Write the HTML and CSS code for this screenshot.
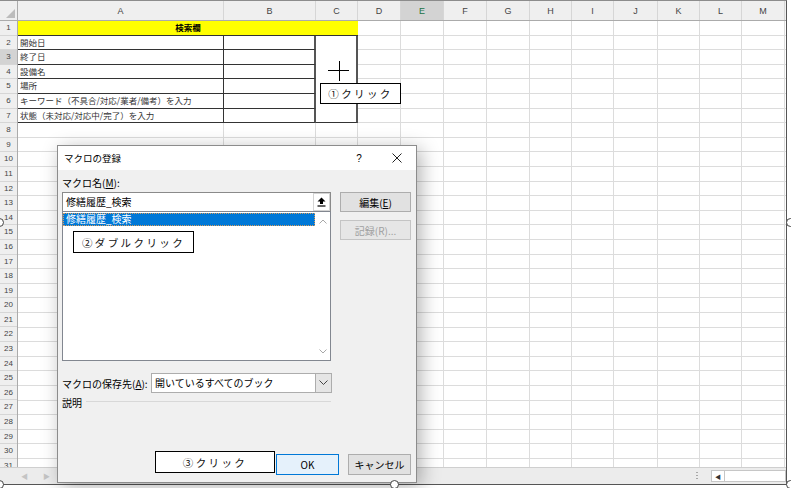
FILE: index.html
```html
<!DOCTYPE html>
<html lang="ja">
<head>
    <meta charset="UTF-8">
    <title>マクロの登録</title>
    <link rel="stylesheet" href="styles.css">
</head>
<body>
    <div class="shot">
        <div class="colhead">
            <div class="corner">
                <svg width="9" height="9" viewBox="0 0 9 9"><path d="M9 0V9H0Z" fill="#bcbcbc"/></svg>
            </div>
            <div>A</div><div>B</div><div>C</div><div>D</div>
            <div class="active">E</div>
            <div>F</div><div>G</div><div>H</div><div>I</div><div>J</div><div>K</div><div>L</div><div>M</div>
        </div>

        <div class="sheet">
            <div class="rowhead">
                <div>1</div><div>2</div><div class="active">3</div><div>4</div><div>5</div>
                <div>6</div><div>7</div><div>8</div><div>9</div><div>10</div>
                <div>11</div><div>12</div><div>13</div><div>14</div><div>15</div>
                <div>16</div><div>17</div><div>18</div><div>19</div><div>20</div>
                <div>21</div><div>22</div><div>23</div><div>24</div><div>25</div>
                <div>26</div><div>27</div><div>28</div><div>29</div><div>30</div>
                <div>31</div>
            </div>
            <div class="cells">
                <div class="gridcols">
                    <div></div><div></div><div></div><div></div><div></div><div></div><div></div>
                    <div></div><div></div><div></div><div></div><div></div><div></div>
                </div>
                <div class="search-table">
                    <div class="title-cell">検索欄</div>
                    <div class="cell-a">開始日</div>
                    <div class="cell-b"></div>
                    <div class="cell-c"></div>
                    <div class="cell-a">終了日</div>
                    <div class="cell-b"></div>
                    <div class="cell-a">設備名</div>
                    <div class="cell-b"></div>
                    <div class="cell-a">場所</div>
                    <div class="cell-b"></div>
                    <div class="cell-a">キーワード（不具合/対応/業者/備考）を入力</div>
                    <div class="cell-b"></div>
                    <div class="cell-a">状態（未対応/対応中/完了）を入力</div>
                    <div class="cell-b"></div>
                </div>
            </div>
        </div>

        <div class="tabbar">
            <span class="nav">&#9664;</span>
            <span class="nav">&#9654;</span>
            <div class="hscroll">
                <span class="grip"></span>
                <span class="arrow-box">&#9664;</span>
                <span class="track"></span>
            </div>
        </div>

        <svg class="cursor" width="21" height="20" viewBox="0 0 21 20">
            <path d="M0 9.5H21M11.5 0V20" stroke="#000" stroke-width="1"/>
        </svg>
        <div class="callout callout-1">①クリック</div>

        <div class="dialog">
            <div class="dlg-title">
                <span class="dlg-name">マクロの登録</span>
                <span class="dlg-help">?</span>
                <span class="dlg-close">
                    <svg width="10" height="10" viewBox="0 0 10 10"><path d="M0.5 0.5L9.5 9.5M9.5 0.5L0.5 9.5" stroke="#222" stroke-width="1"/></svg>
                </span>
            </div>
            <div class="dlg-body">
                <div class="main-row">
                    <div class="left-col">
                        <div class="label">マクロ名(<u>M</u>):</div>
                        <div class="name-input">
                            <span class="name-text">修繕履歴_検索</span>
                            <span class="up-btn">
                                <svg width="9" height="10" viewBox="0 0 9 10"><path d="M4.5 0.5L8.5 4.5H6V7H3V4.5H0.5Z" fill="#000"/><path d="M0.5 9H8.5" stroke="#000" stroke-width="1.2"/></svg>
                            </span>
                        </div>
                        <div class="macro-list">
                            <div class="list-items">
                                <div class="selected">修繕履歴_検索</div>
                            </div>
                            <div class="list-scroll">
                                <svg width="8" height="5" viewBox="0 0 8 5"><path d="M0.5 4.5L4 1L7.5 4.5" fill="none" stroke="#a8a8a8"/></svg>
                                <svg width="8" height="5" viewBox="0 0 8 5"><path d="M0.5 0.5L4 4L7.5 0.5" fill="none" stroke="#a8a8a8"/></svg>
                            </div>
                        </div>
                    </div>
                    <div class="side-col">
                        <div class="btn">編集(<u>E</u>)</div>
                        <div class="btn disabled">記録(R)...</div>
                    </div>
                </div>

                <div class="store-row">
                    <span class="store-label">マクロの保存先(<u>A</u>):</span>
                    <div class="combo">
                        <span class="combo-text">開いているすべてのブック</span>
                        <span class="combo-btn">
                            <svg width="9" height="6" viewBox="0 0 9 6"><path d="M0.5 0.5L4.5 4.5L8.5 0.5" fill="none" stroke="#444"/></svg>
                        </span>
                    </div>
                </div>

                <div class="desc-row">
                    <span>説明</span>
                    <span class="desc-line"></span>
                </div>

                <div class="dlg-footer">
                    <div class="btn btn-ok">OK</div>
                    <div class="btn">キャンセル</div>
                </div>
            </div>
        </div>

        <div class="callout callout-2">②ダブルクリック</div>
        <div class="callout callout-3">③クリック</div>
    </div>

    <span class="handle h-left"></span>
    <span class="handle h-right"></span>
    <span class="handle h-bottom-left"></span>
    <span class="handle h-bottom"></span>
    <span class="handle h-bottom-right"></span>
</body>
</html>
```

FILE: styles.css
```css
* {
    margin: 0;
    padding: 0;
    box-sizing: border-box;
}

:root {
    --cols: 206px 92px 42px 43px 43px 43px 43px 42px 42px 44px 42px 42px 43px;
}

body {
    position: relative;
    width: 791px;
    height: 488px;
    overflow: hidden;
    background: #fff;
    font-family: "Noto Sans CJK JP", sans-serif;
    color: #000;
}

/* excel window */
.shot {
    position: relative;
    width: 787px;
    height: 485px;
    border-top: 1px solid #8c8c8c;
    border-right: 1px solid #555;
    border-bottom: 1px solid #555;
    display: flex;
    flex-direction: column;
}

.colhead {
    display: grid;
    grid-template-columns: 18px var(--cols);
    height: 20px;
    background: #efefef;
    border-bottom: 1px solid #ababab;
    font-family: "Liberation Sans", sans-serif;
    font-size: 9px;
    color: #444;
}

.colhead div {
    display: flex;
    align-items: center;
    justify-content: center;
    border-right: 1px solid #d6d6d6;
}

.colhead .corner {
    align-items: flex-end;
    justify-content: flex-end;
    padding: 0 2px 2px 0;
    border-right: 1px solid #ababab;
}

.colhead .active {
    background: #d3d3d3;
    color: #217346;
}

.sheet {
    flex: 1;
    display: flex;
    overflow: hidden;
}

.rowhead {
    width: 18px;
    flex-shrink: 0;
    background: #efefef;
    border-right: 1px solid #ababab;
    font-family: "Liberation Sans", sans-serif;
    font-size: 8px;
    color: #444;
}

.rowhead div {
    height: 14.6px;
    line-height: 14px;
    text-align: center;
    border-bottom: 1px solid #d6d6d6;
}

.rowhead .active {
    background: #d3d3d3;
}

.cells {
    flex: 1;
    position: relative;
    background: repeating-linear-gradient(to bottom, transparent 0 13.6px, #dcdcdc 13.6px 14.6px);
}

.gridcols {
    position: absolute;
    inset: 0;
    display: grid;
    grid-template-columns: var(--cols);
}

.gridcols div {
    border-right: 1px solid #dcdcdc;
}

.search-table {
    position: relative;
    display: grid;
    grid-template-columns: 206px 92px 42px;
    grid-auto-rows: 14.6px;
    width: 340px;
    font-size: 8.5px;
    color: #333;
}

.search-table div {
    background: #fff;
    line-height: 13.6px;
    white-space: nowrap;
}

.title-cell {
    grid-column: 1 / 4;
    background: #ffff00 !important;
    text-align: center;
    font-weight: bold;
    color: #000;
    border-bottom: 1px solid #333;
}

.cell-a {
    padding-left: 2px;
    border-right: 1px solid #333;
    border-bottom: 1px solid #333;
}

.cell-b {
    border-right: 2px solid #555;
    border-bottom: 1px solid #333;
}

.cell-c {
    grid-row: span 6;
    border-right: 2px solid #555;
    border-bottom: 1px solid #333;
}

.tabbar {
    height: 17px;
    display: flex;
    align-items: center;
    background: #ececec;
    border-top: 1px solid #cfcfcf;
    padding-left: 21px;
    gap: 15px;
    font-size: 7px;
    color: #c4c4c4;
}

.hscroll {
    margin-left: auto;
    display: flex;
    align-items: center;
    height: 100%;
}

.grip {
    width: 2px;
    height: 9px;
    margin-right: 13px;
    background: repeating-linear-gradient(to bottom, #a8a8a8 0 1px, transparent 1px 3px);
}

.arrow-box {
    width: 14px;
    height: 12px;
    background: #fff;
    border: 1px solid #c6c6c6;
    font-size: 6px;
    color: #333;
    display: flex;
    align-items: center;
    justify-content: center;
}

.track {
    width: 61px;
    height: 12px;
    background: #fff;
    border: 1px solid #c6c6c6;
    border-left: none;
}

/* overlays */
.cursor {
    position: absolute;
    left: 328px;
    top: 60px;
}

.callout {
    position: absolute;
    background: #fff;
    border: 1px solid #000;
    font-size: 10.5px;
    letter-spacing: 2.4px;
    display: flex;
    align-items: center;
    justify-content: center;
    white-space: nowrap;
    color: #111;
}

.callout-1 {
    left: 320px;
    top: 82px;
    width: 81px;
    height: 21px;
}

.callout-2 {
    left: 73px;
    top: 230px;
    width: 121px;
    height: 22px;
}

.callout-3 {
    left: 155px;
    top: 450px;
    width: 120px;
    height: 22px;
}

/* macro dialog */
.dialog {
    position: absolute;
    left: 57px;
    top: 144px;
    width: 360px;
    height: 338px;
    background: #f0f0f0;
    border: 1px solid #8c8c8c;
    box-shadow: 4px 4px 18px rgba(0, 0, 0, 0.3);
    display: flex;
    flex-direction: column;
    font-size: 10px;
}

.dlg-title {
    height: 24px;
    background: #fff;
    display: flex;
    align-items: center;
}

.dlg-name {
    flex: 1;
    padding-left: 6px;
    font-size: 9.5px;
}

.dlg-help,
.dlg-close {
    width: 38px;
    display: flex;
    justify-content: center;
    font-family: "Liberation Sans", sans-serif;
    font-size: 10px;
}

.dlg-body {
    flex: 1;
    display: flex;
    flex-direction: column;
    padding: 7px 5px 7px 4px;
}

.main-row {
    display: flex;
    gap: 9px;
}

.left-col {
    width: 269px;
}

.label {
    line-height: 12px;
    margin-bottom: 3px;
}

.name-input {
    height: 20px;
    display: flex;
    background: #fff;
    border: 1px solid #8a8a8a;
}

.name-text {
    flex: 1;
    padding-left: 3px;
    line-height: 18px;
}

.up-btn {
    width: 17px;
    display: flex;
    align-items: center;
    justify-content: center;
    border: 1px solid #d4d4d4;
}

.macro-list {
    height: 150px;
    margin-top: -1px;
    display: flex;
    background: #fff;
    border: 1px solid #828790;
}

.list-items {
    flex: 1;
    padding-top: 1px;
}

.selected {
    height: 13px;
    line-height: 12px;
    padding-left: 3px;
    background: #0078d7;
    color: #fff;
    outline: 1px dotted #d89c5a;
    outline-offset: -1px;
}

.list-scroll {
    width: 15px;
    display: flex;
    flex-direction: column;
    justify-content: space-between;
    align-items: center;
    padding: 7px 0 6px;
}

.side-col {
    display: flex;
    flex-direction: column;
    gap: 8px;
    margin-top: 15px;
}

.btn {
    width: 71px;
    height: 20px;
    display: flex;
    align-items: center;
    justify-content: center;
    background: #e1e1e1;
    border: 1px solid #adadad;
}

.btn.disabled {
    color: #a0a0a0;
    background: #e6e6e6;
    border-color: #c4c4c4;
}

.store-row {
    margin-top: 12px;
    height: 20px;
    display: flex;
    align-items: center;
}

.store-label {
    width: 89px;
}

.combo {
    width: 181px;
    height: 20px;
    display: flex;
    background: #fff;
    border: 1px solid #adadad;
}

.combo-text {
    flex: 1;
    padding-left: 3px;
    line-height: 18px;
}

.combo-btn {
    width: 16px;
    display: flex;
    align-items: center;
    justify-content: center;
    background: #e5e5e5;
    border-left: 1px solid #adadad;
}

.desc-row {
    width: 269px;
    margin-top: 2px;
    height: 14px;
    display: flex;
    align-items: center;
    gap: 4px;
}

.desc-line {
    flex: 1;
    height: 1px;
    margin-top: -1px;
    background: #d8d8d8;
}

.dlg-footer {
    margin-top: auto;
    display: flex;
    justify-content: flex-end;
    gap: 9px;
}

.dlg-footer .btn {
    width: 63px;
    height: 21px;
}

.btn-ok {
    background: #e5f1fb !important;
    border-color: #0078d7 !important;
}

/* selection handles of the picture */
.handle {
    position: absolute;
    width: 9px;
    height: 9px;
    border-radius: 50%;
    background: #fff;
    border: 1.5px solid #444;
}

.h-left { left: -5px; top: 218px; }
.h-right { left: 786px; top: 218px; }
.h-bottom-left { left: -5px; top: 480px; }
.h-bottom { left: 390px; top: 480px; }
.h-bottom-right { left: 786px; top: 480px; }
```
